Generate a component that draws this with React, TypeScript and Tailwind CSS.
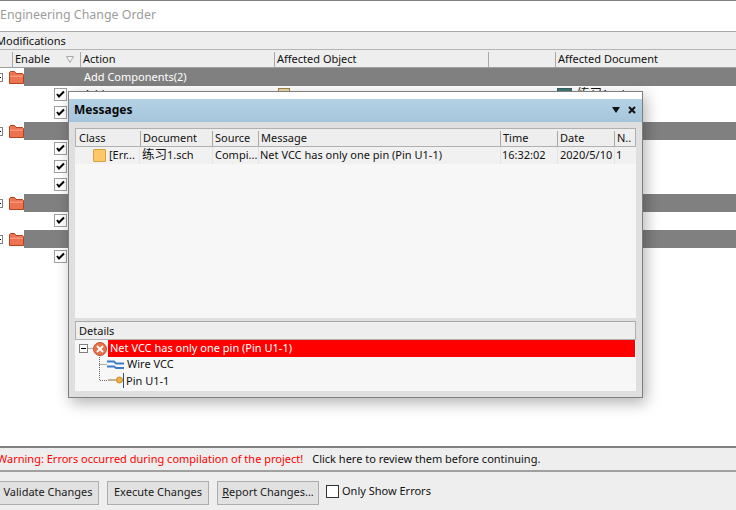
const font = "font-['Noto_Sans','Noto_Sans_CJK_SC',sans-serif]";

function Check() {
  return (
    <span className="flex h-[13px] w-[13px] items-center justify-center border border-[#a0a0a0] bg-white">
      <svg width="9" height="8" viewBox="0 0 9 8">
        <path d="M1 4 L3 6.5 L8 1.5" fill="none" stroke="#000" strokeWidth="2" />
      </svg>
    </span>
  );
}

function Folder() {
  return (
    <svg width="15" height="13" viewBox="0 0 15 13">
      <path d="M0.5 12.5V1.5L1.5 0.5H5.5L7 2.5H13.5L14.5 3.5V12.5Z" fill="#ee7350" stroke="#b8401c" />
      <path d="M1 4.5H14V6H1Z" fill="#f59a7c" />
    </svg>
  );
}

function Minus({ className = "" }: { className?: string }) {
  return (
    <span className={`flex h-[9px] w-[9px] items-center justify-center border border-[#808080] bg-white ${className}`}>
      <span className="h-px w-[5px] bg-black" />
    </span>
  );
}

function GroupRow({ label }: { label?: string }) {
  return (
    <div className="flex h-[18px] items-center">
      <Minus className="-ml-[6px] mr-[6px]" />
      <Folder />
      <div className="flex h-full flex-1 items-center bg-[#808080] pl-[60px] text-white">{label}</div>
    </div>
  );
}

function ItemRow({ children }: { children?: React.ReactNode }) {
  return (
    <div className="flex h-[18px] items-center pb-[2px] pl-[54px]">
      <Check />
      {children}
    </div>
  );
}

function ActionButton({ children, width }: { children: React.ReactNode; width: string }) {
  return (
    <button className={`h-6 border border-[#adadad] bg-[#e1e1e1] text-[#1a1a1a] ${width}`}>{children}</button>
  );
}

function HeaderCell({ children, className = "" }: { children?: React.ReactNode; className?: string }) {
  return (
    <div className={`flex h-[15px] items-center overflow-hidden whitespace-nowrap border-l border-[#a8a8a8] pl-[2px] ${className}`}>
      {children}
    </div>
  );
}

const msgCols = "grid grid-cols-[64px_72px_46px_242px_57px_57px_1fr]";

function Cjk({ children }: { children: React.ReactNode }) {
  return <span className="text-[12.5px] leading-none">{children}</span>;
}

function Messages() {
  return (
    <div className="absolute left-[68px] top-[91px] flex h-[307px] w-[575px] flex-col border border-[#7f7f7f] bg-[#dfdfdf] shadow-[3px_5px_14px_rgba(0,0,0,0.3)]">
      <div className="h-[7px] bg-white" />
      <div className="flex h-[23px] items-center justify-between bg-gradient-to-b from-[#b5d1e6] to-[#a6c6db] pb-px pl-[5px] pr-[6px] text-[12px] font-bold text-[#0a0a0a]">
        <span>Messages</span>
        <div className="flex items-center gap-[8px]">
          <svg width="8" height="6" viewBox="0 0 8 6"><path d="M0 0H8L4 6Z" fill="#111" /></svg>
          <svg width="8" height="8" viewBox="0 0 8 8"><path d="M1 1L7 7M7 1L1 7" stroke="#111" strokeWidth="2" /></svg>
        </div>
      </div>
      <div className="mx-[6px] mt-[6px] flex h-[190px] w-[561px] flex-col bg-[#f7f7f7]">
        <div className={`${msgCols} h-[19px] items-center border border-[#b0b0b0] bg-[#eeeeee] pt-px text-[#111]`}>
          <div className="pl-[3px]">Class</div>
          <HeaderCell>Document</HeaderCell>
          <HeaderCell>Source</HeaderCell>
          <HeaderCell>Message</HeaderCell>
          <HeaderCell>Time</HeaderCell>
          <HeaderCell>Date</HeaderCell>
          <HeaderCell>N..</HeaderCell>
        </div>
        <div className={`${msgCols} h-[17px] items-center bg-[#f1f1f1] pl-px text-[#111] [&>div]:whitespace-nowrap`}>
          <div className="flex items-center gap-[3px] border-r border-[#e4e4e4] pl-[17px]">
            <span className="h-[13px] w-[13px] rounded-[1px] border border-[#d9a03c] bg-[#fcc868]" />
            <span>[Err...</span>
          </div>
          <div className="pl-[2px]"><Cjk>练习</Cjk>1.sch</div>
          <div className="border-l border-[#e4e4e4] pl-[2px]">Compi...</div>
          <div className="border-l border-[#e4e4e4] pl-px">Net VCC has only one pin (Pin U1-1)</div>
          <div className="border-l border-[#e4e4e4] pl-px">16:32:02</div>
          <div className="border-l border-[#e4e4e4] pl-[2px]">2020/5/10</div>
          <div className="border-l border-[#e4e4e4] pl-px">1</div>
        </div>
      </div>
      <div className="mx-[6px] mt-[3px] flex h-[70px] w-[561px] flex-col border-t border-[#a8a8a8] bg-[#f7f7f7]">
        <div className="flex h-[18px] items-center border-x border-b border-[#b0b0b0] bg-[#eeeeee] pl-[3px] pt-px text-[#111]">Details</div>
        <div className="relative">
          <svg className="absolute left-0 top-0" width="40" height="52" viewBox="0 0 40 52">
            <path d="M13.5 8.5H18M24.5 15V40.5H33M24.5 24.5H32" fill="none" stroke="#666" strokeDasharray="1 1" />
          </svg>
          <div className="flex h-[17px] items-center">
            <Minus className="ml-[4px]" />
            <svg className="ml-[5px]" width="14" height="14" viewBox="0 0 14 14">
              <circle cx="7" cy="7" r="6.5" fill="#e8704a" stroke="#c9502c" />
              <path d="M4 4L10 10M10 4L4 10" stroke="#fff" strokeWidth="1.8" />
            </svg>
            <div className="ml-px flex h-full w-[527px] items-center bg-[#ff0000] pl-[2px] text-white">Net VCC has only one pin (Pin U1-1)</div>
          </div>
          <div className="flex h-[15px] items-center pl-[32px] text-[#111]">
            <svg width="17" height="9" viewBox="0 0 17 9">
              <path d="M0 1.5H7L9 3.5H17M0 6.5H7L9 8H17" fill="none" stroke="#3d7cc9" strokeWidth="1.8" />
            </svg>
            <span className="ml-[3px]">Wire VCC</span>
          </div>
          <div className="flex h-[16px] items-center pl-[33px] text-[#111]">
            <svg width="15" height="8" viewBox="0 0 15 8">
              <path d="M0 4H9" stroke="#8a6a3a" />
              <circle cx="11.5" cy="4" r="3" fill="#f0b040" stroke="#c88a30" />
            </svg>
            <span className="border-l border-[#1f4f8f] pl-[2px] leading-[15px]">Pin U1-1</span>
          </div>
        </div>
      </div>
    </div>
  );
}

export default function App() {
  return (
    <div className={`relative flex h-[510px] w-[736px] flex-col overflow-hidden bg-white text-[11px] ${font}`}>
      <div className="flex h-[32px] items-center border-y border-t-[#808080] border-b-[#a8a8a8] pb-px text-[12.4px] text-[#9c9c9c]">
        Engineering Change Order
      </div>
      <div className="flex h-[18px] items-center border-b border-[#b4b4b4] bg-[#eeeeee] pt-px text-[#111]">
        <span className="-ml-[4px]">Modifications</span>
      </div>
      <div className="grid h-[18px] grid-cols-[12px_68px_194px_214px_67px_1fr] items-center border-b border-[#a0a0a0] bg-[#eeeeee] pt-px text-[#111]">
        <div />
        <HeaderCell className="justify-between pr-[6px]">
          Enable
          <svg width="8" height="7" viewBox="0 0 8 7"><path d="M0.5 0.5H7.5L4 6.5Z" fill="#f4f4f4" stroke="#a8a8a8" /></svg>
        </HeaderCell>
        <HeaderCell>Action</HeaderCell>
        <HeaderCell>Affected Object</HeaderCell>
        <HeaderCell />
        <HeaderCell>Affected Document</HeaderCell>
      </div>
      <div className="flex-1">
        <GroupRow label="Add Components(2)" />
        <ItemRow>
          <span className="ml-[17px] w-[194px] text-[#111]">Add</span>
          <span className="h-[12px] w-[12px] border border-[#9c8550] bg-[#f0d8a0]" />
          <span className="ml-[267px] h-[12px] w-[15px] border border-[#3a6060] bg-[#3f7a7a]" />
          <span className="ml-[5px] text-[#111]"><Cjk>练习</Cjk>1.sch</span>
        </ItemRow>
        <ItemRow />
        <GroupRow />
        <ItemRow />
        <ItemRow />
        <ItemRow />
        <GroupRow />
        <ItemRow />
        <GroupRow />
        <ItemRow />
      </div>
      <div className="flex h-[26px] items-center border-y-2 border-t-[#808080] border-b-[#a0a0a0] bg-[#eeeeee]">
        <span className="-ml-[3px] text-[#ff0000]">Warning: Errors occurred during compilation of the project!</span>
        <span className="ml-[9px] text-[#111]">Click here to review them before continuing.</span>
      </div>
      <div className="flex h-[38px] items-center bg-[#eeeeee] pt-[3px] text-[#111]">
        <ActionButton width="-ml-[3px] w-[102px]">Validate Changes</ActionButton>
        <ActionButton width="ml-[8px] w-[102px]">Execute Changes</ActionButton>
        <ActionButton width="ml-[8px] w-[102px]"><u>R</u>eport Changes...</ActionButton>
        <span className="ml-[7px] -mt-[3px] h-[13px] w-[13px] border border-[#333] bg-white" />
        <span className="ml-[3px] -mt-[2px]">Only Show Errors</span>
      </div>
      <Messages />
    </div>
  );
}
